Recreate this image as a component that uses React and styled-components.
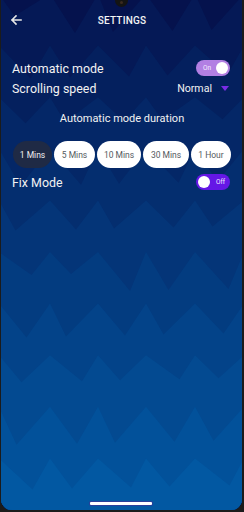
import React from 'react';
import styled, { createGlobalStyle } from 'styled-components';

const Global = createGlobalStyle`
  html, body { margin: 0; padding: 0; background: #1b1b1b; }
  body { font-family: Roboto, "Noto Sans", sans-serif; }
  #root { width: 244px; height: 512px; }
`;

const Device = styled.div`
  width: 244px;
  height: 512px;
  box-sizing: border-box;
  padding: 0 2px 2px 1px;
  background: #1b1b1b;
`;

const Screen = styled.div`
  position: relative;
  width: 100%;
  height: 100%;
  overflow: hidden;
  border-radius: 0 0 11px 11px;
  background: #05124d;
`;

const Backdrop = styled.svg`
  position: absolute;
  inset: 0;
  width: 100%;
  height: 100%;
  display: block;
`;

const Notch = styled.div`
  position: absolute;
  top: -6px;
  left: 114px;
  width: 13px;
  height: 13px;
  border-radius: 50%;
  background: #141414;
  &::after {
    content: '';
    position: absolute;
    left: 5px;
    top: 7px;
    width: 3px;
    height: 3px;
    border-radius: 50%;
    background: #3a2a20;
  }
`;

const Content = styled.div`
  position: relative;
  display: flex;
  flex-direction: column;
  padding: 0 10px 0 11px;
  color: #f2f2f2;
`;

const Header = styled.header`
  position: relative;
  height: 40px;
  display: flex;
  align-items: center;
  justify-content: center;
`;

const BackButton = styled.button`
  position: absolute;
  left: -2px;
  top: 14px;
  width: 12px;
  height: 12px;
  padding: 0;
  border: 0;
  background: none;
  display: flex;
`;

const Title = styled.h1`
  margin: 0;
  font-size: 10px;
  font-weight: 500;
  letter-spacing: 0.2px;
  color: #f4f4f4;
`;

const Row = styled.div`
  display: flex;
  align-items: center;
  justify-content: space-between;
  height: 20px;
  margin-top: ${(p) => p.$mt || 0}px;
`;

const Label = styled.span`
  font-size: 12.4px;
  color: #f2f2f2;
`;

const Switch = styled.div`
  position: relative;
  width: 34px;
  height: 16px;
  border-radius: 8px;
  margin-right: 2px;
  background: ${(p) => (p.$on ? '#b27fe3' : '#6517e6')};
  display: flex;
  align-items: center;
  justify-content: ${(p) => (p.$on ? 'flex-start' : 'flex-end')};
  padding: ${(p) => (p.$on ? '0 0 0 7px' : '0 5px 0 0')};
  box-sizing: border-box;
  font-size: 6.5px;
  color: #f4ecff;
  &::after {
    content: '';
    position: absolute;
    top: 2px;
    ${(p) => (p.$on ? 'right: 2px;' : 'left: 2px;')}
    width: 12px;
    height: 12px;
    border-radius: 50%;
    background: #ffffff;
  }
`;

const Select = styled.div`
  display: flex;
  align-items: center;
  gap: 9px;
  margin-right: 3px;
  font-size: 10.6px;
  color: #f2f2f2;
`;

const Caret = styled.span`
  width: 0;
  height: 0;
  border-left: 4px solid transparent;
  border-right: 4px solid transparent;
  border-top: 5px solid #7a2ce6;
`;

const SectionTitle = styled.div`
  margin-top: 12px;
  height: 16px;
  display: flex;
  align-items: center;
  justify-content: center;
  font-size: 11px;
  color: #f2f2f2;
`;

const Chips = styled.div`
  display: flex;
  gap: 2px;
  margin-top: 15px;
  padding-left: 1px;
`;

const Chip = styled.button`
  width: ${(p) => p.$w}px;
  height: 27px;
  padding: 0;
  border: 0;
  border-radius: 14px;
  font-family: Roboto, "Noto Sans", sans-serif;
  font-size: 8.5px;
  color: ${(p) => (p.$active ? '#f0f0f0' : '#555a60')};
  background: ${(p) => (p.$active ? '#1f2a45' : '#ffffff')};
  white-space: nowrap;
`;

const HomeBar = styled.div`
  position: absolute;
  left: 89px;
  bottom: 5px;
  width: 62px;
  height: 3px;
  border-radius: 1px;
  background: #ffffff;
  box-shadow: 0 0 0 1px #2a3f9a;
`;

function lerp(a, b, t) {
  return Math.round(a + (b - a) * t);
}

function bandColor(i, n) {
  const t = i / n;
  const r = lerp(5, 2, t);
  const g = lerp(18, 88, t);
  const b = lerp(77, 162, t);
  return `rgb(${r},${g},${b})`;
}

function Background() {
  const peaksX = [-2, 49, 97, 145, 194, 243];
  const n = 10;
  const bands = [];
  for (let k = 0; k < n; k++) {
    const p = -6 + k * 51.6;
    const pts = [];
    for (let j = 0; j < peaksX.length; j++) {
      pts.push(`${peaksX[j]},${p}`);
      if (j < peaksX.length - 1) {
        const mid = (peaksX[j] + peaksX[j + 1]) / 2;
        const dx = ((k * 37 + j * 53) % 21) - 10;
        const depth = 22 + ((k * 29 + j * 17) % 18);
        pts.push(`${mid + dx},${p + depth}`);
      }
    }
    pts.push('250,530', '-10,530');
    bands.push(<polygon key={k} points={pts.join(' ')} fill={bandColor(k + 1, n)} />);
  }
  return (
    <Backdrop viewBox="0 0 241 510" preserveAspectRatio="none">
      <rect x="0" y="0" width="241" height="510" fill={bandColor(0, n)} />
      {bands}
    </Backdrop>
  );
}

const durations = [
  { label: '1 Mins', w: 39, active: true },
  { label: '5 Mins', w: 41 },
  { label: '10 Mins', w: 44 },
  { label: '30 Mins', w: 46 },
  { label: '1 Hour', w: 40 },
];

export default function App() {
  return (
    <>
      <Global />
      <Device>
        <Screen>
          <Background />
          <Notch />
          <Content>
            <Header>
              <BackButton aria-label="back">
                <svg width="12" height="12" viewBox="0 0 12 12">
                  <path d="M11 6H2M6 2L2 6l4 4" fill="none" stroke="#e6e6e6" strokeWidth="1.6" strokeLinecap="square" />
                </svg>
              </BackButton>
              <Title>SETTINGS</Title>
            </Header>
            <Row $mt={18}>
              <Label>Automatic mode</Label>
              <Switch $on>On</Switch>
            </Row>
            <Row>
              <Label>Scrolling speed</Label>
              <Select>
                Normal
                <Caret />
              </Select>
            </Row>
            <SectionTitle>Automatic mode duration</SectionTitle>
            <Chips>
              {durations.map((d) => (
                <Chip key={d.label} $active={d.active} $w={d.w}>
                  {d.label}
                </Chip>
              ))}
            </Chips>
            <Row $mt={4}>
              <Label>Fix Mode</Label>
              <Switch>Off</Switch>
            </Row>
          </Content>
          <HomeBar />
        </Screen>
      </Device>
    </>
  );
}
